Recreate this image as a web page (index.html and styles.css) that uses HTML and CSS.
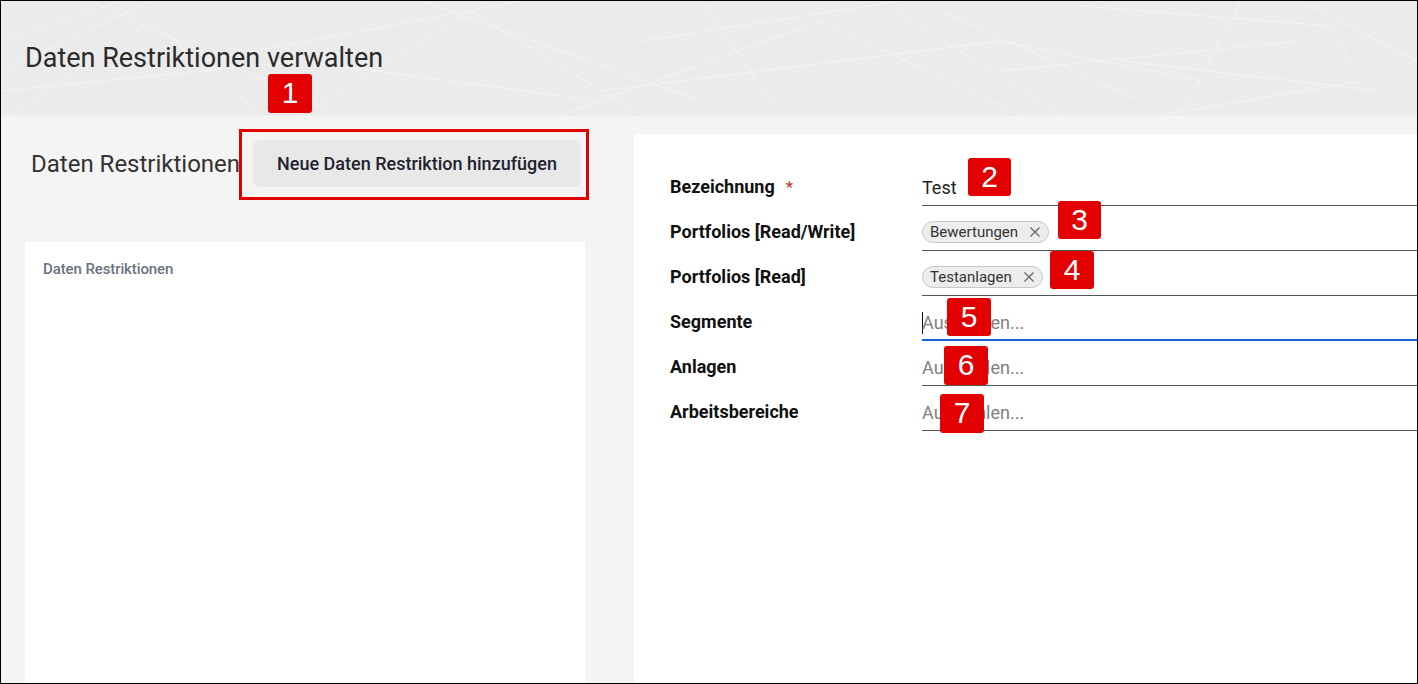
FILE: index.html
```html
<!DOCTYPE html>
<html lang="de">
<head>
<meta charset="utf-8">
<title>Daten Restriktionen verwalten</title>
<link rel="stylesheet" href="styles.css">
</head>
<body>
<div class="page">
  <header class="top">
    <svg class="mesh" viewBox="0 0 1416 114" preserveAspectRatio="none" aria-hidden="true">
      <g fill="none" stroke="#ffffff" stroke-width="1" opacity="0.45">
        <path d="M0 40 L120 0 M10 114 L150 20 L260 114 M90 0 L330 110 M200 60 L520 0 M300 114 L470 10 L640 114"/>
        <path d="M420 0 L700 100 M560 114 L820 20 L1020 114 M640 40 L900 0 M600 90 L1000 40 L1200 80"/>
        <path d="M700 0 L780 114 M880 0 L1060 114 M940 10 L1140 100 M1000 70 L1300 40 M1080 5 L1330 25 L1360 80 L1160 114"/>
        <path d="M1120 60 L1380 90 M1240 0 L1180 114 M1300 0 L1416 60 M0 90 L300 60 L600 100 M150 0 L0 70"/>
      </g>
    </svg>
    <h1 class="title">Daten Restriktionen verwalten</h1>
  </header>
  <div class="main">
    <section class="list-col">
      <div class="list-head">
        <h2 class="list-title">Daten Restriktionen</h2>
        <button class="btn-add" type="button">Neue Daten Restriktion hinzufügen</button>
      </div>
      <div class="card">
        <div class="card-label">Daten Restriktionen</div>
      </div>
    </section>
    <section class="detail">
      <div class="form">
        <div class="row">
          <div class="label">Bezeichnung<span class="req">*</span></div>
          <div class="field"><span class="value">Test</span></div>
        </div>
        <div class="row">
          <div class="label">Portfolios [Read/Write]</div>
          <div class="field">
            <span class="chip">Bewertungen<svg class="chip-x" viewBox="0 0 12 12"><path d="M1.5 1.5 L10.5 10.5 M10.5 1.5 L1.5 10.5"/></svg></span>
          </div>
        </div>
        <div class="row">
          <div class="label">Portfolios [Read]</div>
          <div class="field">
            <span class="chip">Testanlagen<svg class="chip-x" viewBox="0 0 12 12"><path d="M1.5 1.5 L10.5 10.5 M10.5 1.5 L1.5 10.5"/></svg></span>
          </div>
        </div>
        <div class="row">
          <div class="label">Segmente</div>
          <div class="field focused"><span class="caret"></span><span class="placeholder">Auswählen...</span></div>
        </div>
        <div class="row">
          <div class="label">Anlagen</div>
          <div class="field"><span class="placeholder">Auswählen...</span></div>
        </div>
        <div class="row">
          <div class="label">Arbeitsbereiche</div>
          <div class="field"><span class="placeholder">Auswählen...</span></div>
        </div>
      </div>
    </section>
  </div>
  <div class="mark-box"></div>
  <span class="badge b1">1</span>
  <span class="badge b2">2</span>
  <span class="badge b3">3</span>
  <span class="badge b4">4</span>
  <span class="badge b5">5</span>
  <span class="badge b6">6</span>
  <span class="badge b7">7</span>
</div>
</body>
</html>
```
FILE: styles.css
```css
* { box-sizing: border-box; }
html, body { margin: 0; padding: 0; }
body { font-family: Roboto, "Liberation Sans", Arial, sans-serif; background: #fff; }

.page {
  position: relative;
  width: 1418px;
  height: 684px;
  border: 1px solid #000;
  overflow: hidden;
  display: flex;
  flex-direction: column;
}

.top {
  position: relative;
  height: 114px;
  flex: none;
  background: #ebebeb;
  padding: 41px 0 0 24px;
}
.mesh { position: absolute; left: 0; top: 0; width: 100%; height: 100%; }
.title {
  position: relative;
  margin: 0;
  font-size: 27px;
  font-weight: 400;
  line-height: 32px;
  color: #2b2b2b;
}

.main {
  flex: 1;
  display: flex;
  background: #f4f4f4;
  border-top: 1px solid #f0f0f0;
}

.list-col {
  width: 633px;
  flex: none;
  display: flex;
  flex-direction: column;
  padding: 24px 0 0 24px;
}
.list-head { display: flex; align-items: center; height: 47px; }
.list-title {
  margin: 0 0 0 6px;
  width: 208px;
  flex: none;
  white-space: nowrap;
  font-size: 24px;
  font-weight: 400;
  color: #333;
}
.btn-add {
  margin-left: 14px;
  width: 328px;
  height: 47px;
  border: none;
  border-radius: 7px;
  background: #e8e8e8;
  font-family: Roboto, "Liberation Sans", sans-serif;
  font-size: 18px;
  font-weight: 500;
  color: #1f2330;
  padding: 0;
}
.card {
  margin-top: 55px;
  width: 560px;
  flex: 1;
  background: #fff;
  padding: 18px 18px;
}
.card-label {
  font-size: 15px;
  font-weight: 500;
  color: #6b7280;
  letter-spacing: -0.1px;
}

.detail {
  flex: 1;
  margin-top: 18px;
  background: #fff;
  padding: 27px 0 0 36px;
}
.row {
  display: grid;
  grid-template-columns: 252px 1fr;
  height: 45px;
}
.label {
  padding-top: 16px;
  font-size: 18px;
  line-height: 20px;
  font-weight: 700;
  color: #111;
  white-space: nowrap;
}
.req { color: #c0392b; font-weight: 400; margin-left: 11px; font-size: 17px; }
.field {
  border-bottom: 1px solid #555;
  padding-top: 17px;
  font-size: 18px;
  line-height: 20px;
  color: #222;
  display: flex;
  align-items: flex-start;
}
.field.focused { border-bottom: 2px solid #1565d8; }
.value { color: #222; }
.placeholder { color: #808080; }
.caret {
  display: inline-block;
  width: 1px;
  height: 22px;
  margin-top: -1px;
  margin-right: -1px;
  background: #111;
}
.chip {
  margin-top: -2px;
  display: inline-flex;
  align-items: center;
  height: 22px;
  padding: 0 7px 0 7px;
  border: 1px solid #c8c8c8;
  border-radius: 11px;
  background: #ededed;
  font-size: 15px;
  color: #333;
}
.chip-x {
  width: 12px;
  height: 12px;
  margin-left: 11px;
  fill: none;
  stroke: #666;
  stroke-width: 1.3;
}

.mark-box {
  position: absolute;
  left: 238px;
  top: 128px;
  width: 350px;
  height: 71px;
  border: 3px solid #e00000;
}
.badge {
  position: absolute;
  width: 44px;
  height: 38px;
  border-radius: 3px;
  background: #e30000;
  color: #fff;
  font-family: "Liberation Sans", Arial, sans-serif;
  font-size: 30px;
  line-height: 38px;
  text-align: center;
}
.b1 { left: 267px; top: 73px; height: 39px; }
.b2 { left: 967px; top: 157px; width: 43px; }
.b3 { left: 1057px; top: 200px; width: 43px; }
.b4 { left: 1049px; top: 250px; }
.b5 { left: 946px; top: 297px; }
.b6 { left: 943px; top: 345px; height: 39px; }
.b7 { left: 939px; top: 393px; height: 39px; }
```
